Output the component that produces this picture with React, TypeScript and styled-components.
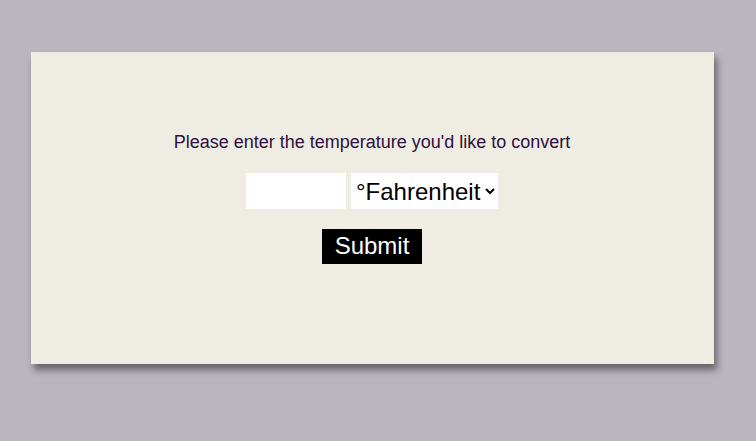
import React from "react";
import styled, { createGlobalStyle } from "styled-components";

const GlobalStyle = createGlobalStyle`
  html, body {
    margin: 0;
    padding: 0;
    background: #b9b6bd;
    font-family: "Liberation Sans", Arial, sans-serif;
  }
`;

const Page = styled.div`
  min-height: 100vh;
  box-sizing: border-box;
  padding: 52px 0 0 31px;
`;

const Card = styled.div`
  width: 683px;
  height: 312px;
  box-sizing: border-box;
  background: #efede3;
  box-shadow: 3px 6px 7px rgba(0, 0, 0, 0.45);
  display: flex;
  flex-direction: column;
  align-items: center;
  padding: 80px 1px 0 0;
`;

const Prompt = styled.p`
  margin: 0;
  font-size: 18px;
  color: #2e0f3d;
`;

const Row = styled.div`
  display: flex;
  gap: 5px;
  margin-top: 20px;
`;

const TempInput = styled.input`
  width: 100px;
  height: 36px;
  box-sizing: border-box;
  border: none;
  outline: none;
  background: #fff;
  font-family: "Liberation Sans", Arial, sans-serif;
  font-size: 24px;
  padding: 0 4px;
`;

const UnitSelect = styled.select`
  width: 147px;
  height: 36px;
  box-sizing: border-box;
  border: none;
  outline: none;
  border-radius: 0;
  background: #fff;
  color: #000;
  font-family: "Liberation Sans", Arial, sans-serif;
  font-size: 24px;
  padding: 0 0 0 1px;
`;

const SubmitButton = styled.button`
  margin-top: 20px;
  width: 100px;
  height: 35px;
  border: none;
  border-radius: 0;
  background: #000;
  color: #fff;
  font-family: "Liberation Sans", Arial, sans-serif;
  font-size: 24px;
  padding: 0 0 1px;
  cursor: pointer;
`;

export default function App() {
  return (
    <>
      <GlobalStyle />
      <Page>
        <Card>
          <Prompt>Please enter the temperature you'd like to convert</Prompt>
          <Row>
            <TempInput type="text" />
            <UnitSelect defaultValue="F">
              <option value="F">°Fahrenheit</option>
              <option value="C">°Celsius</option>
            </UnitSelect>
          </Row>
          <SubmitButton>Submit</SubmitButton>
        </Card>
      </Page>
    </>
  );
}
